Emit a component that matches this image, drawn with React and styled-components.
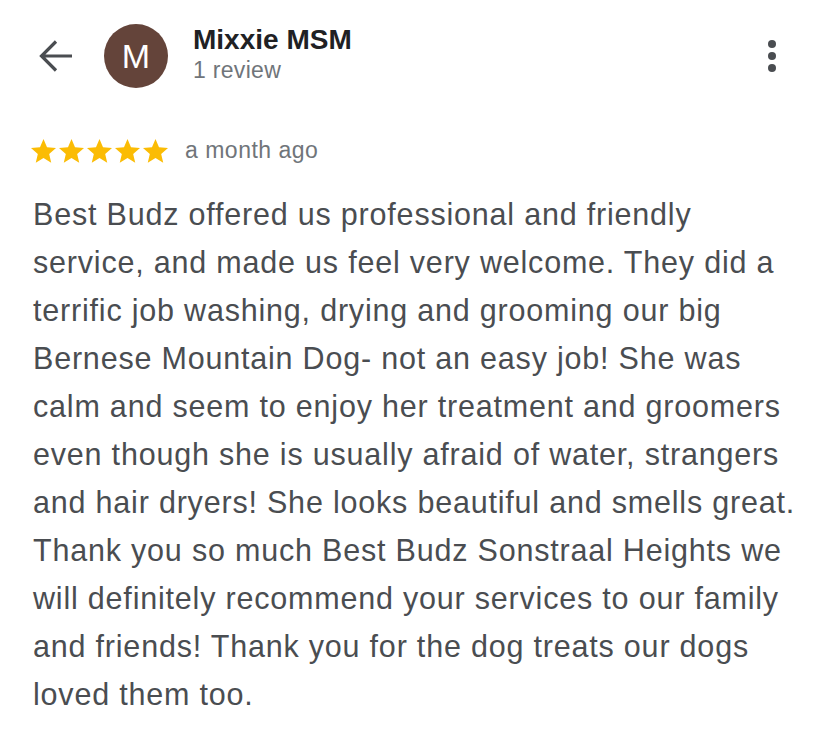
import styled, { createGlobalStyle } from "styled-components";

const GlobalStyle = createGlobalStyle`
  body {
    margin: 0;
    background: #ffffff;
    font-family: "Liberation Sans", Arial, sans-serif;
  }
`;

const lines = [
  "Best Budz offered us professional and friendly",
  "service, and made us feel very welcome. They did a",
  "terrific job washing, drying and grooming our big",
  "Bernese Mountain Dog- not an easy job! She was",
  "calm and seem to enjoy her treatment and groomers",
  "even though she is usually afraid of water, strangers",
  "and hair dryers! She looks beautiful and smells great.",
  "Thank you so much Best Budz Sonstraal Heights we",
  "will definitely recommend your services to our family",
  "and friends! Thank you for the dog treats our dogs",
  "loved them too.",
];

export default function App() {
  return (
    <Page>
      <GlobalStyle />
      <Header>
        <BackButton aria-label="Back">
          <svg width="34" height="32" viewBox="0 0 34 32">
            <path
              d="M33 16H3M17 1.5L2.5 16L17 30.5"
              fill="none"
              stroke="#4a4d51"
              strokeWidth="3.2"
            />
          </svg>
        </BackButton>
        <Avatar>M</Avatar>
        <Author>
          <Name>Mixxie MSM</Name>
          <Count>1 review</Count>
        </Author>
        <MoreButton aria-label="More">
          <Dot />
          <Dot />
          <Dot />
        </MoreButton>
      </Header>
      <Meta>
        <Stars>
          {[0, 1, 2, 3, 4].map((i) => (
            <svg key={i} width="25" height="24" viewBox="2 2 20 19.2">
              <path
                d="M12 17.27L18.18 21l-1.64-7.03L22 9.24l-7.19-.61L12 2 9.19 8.63 2 9.24l5.46 4.73L5.82 21z"
                fill="#fbbc04"
              />
            </svg>
          ))}
        </Stars>
        <When>a month ago</When>
      </Meta>
      <Body>
        {lines.map((l, i) => (
          <Line key={i}>{l}</Line>
        ))}
      </Body>
    </Page>
  );
}

const Page = styled.div`
  width: 828px;
  height: 737px;
  overflow: hidden;
  background: #fff;
`;

const Header = styled.div`
  display: flex;
  align-items: center;
  height: 112px;
  padding: 0 52px 0 39px;
`;

const BackButton = styled.div`
  display: flex;
  width: 34px;
  height: 34px;
  align-items: center;
  justify-content: center;
  margin-right: 31px;
`;

const Avatar = styled.div`
  width: 64px;
  height: 64px;
  border-radius: 50%;
  background: #64443a;
  color: #fff;
  font-size: 34px;
  display: flex;
  align-items: center;
  justify-content: center;
  margin-right: 25px;
`;

const Author = styled.div`
  display: flex;
  flex-direction: column;
  flex: 1;
  margin-top: -3px;
`;

const Name = styled.div`
  font-size: 28px;
  font-weight: 700;
  color: #202124;
  line-height: 30px;
`;

const Count = styled.div`
  font-size: 23px;
  letter-spacing: 0.3px;
  color: #70757a;
  line-height: 30px;
`;

const MoreButton = styled.div`
  display: flex;
  flex-direction: column;
  gap: 4px;
  align-items: center;
`;

const Dot = styled.span`
  width: 8px;
  height: 8px;
  border-radius: 50%;
  background: #4a4d51;
`;

const Meta = styled.div`
  display: flex;
  align-items: center;
  padding: 25px 31px 0;
  gap: 17px;
`;

const Stars = styled.div`
  display: flex;
  gap: 3px;
`;

const When = styled.span`
  font-size: 23px;
  letter-spacing: 0.5px;
  color: #70757a;
`;

const Body = styled.div`
  padding: 26px 33px 0;
  font-size: 30.5px;
  letter-spacing: 0.8px;
  line-height: 48px;
  color: #4a4d51;
`;

const Line = styled.div`
  white-space: nowrap;
`;
